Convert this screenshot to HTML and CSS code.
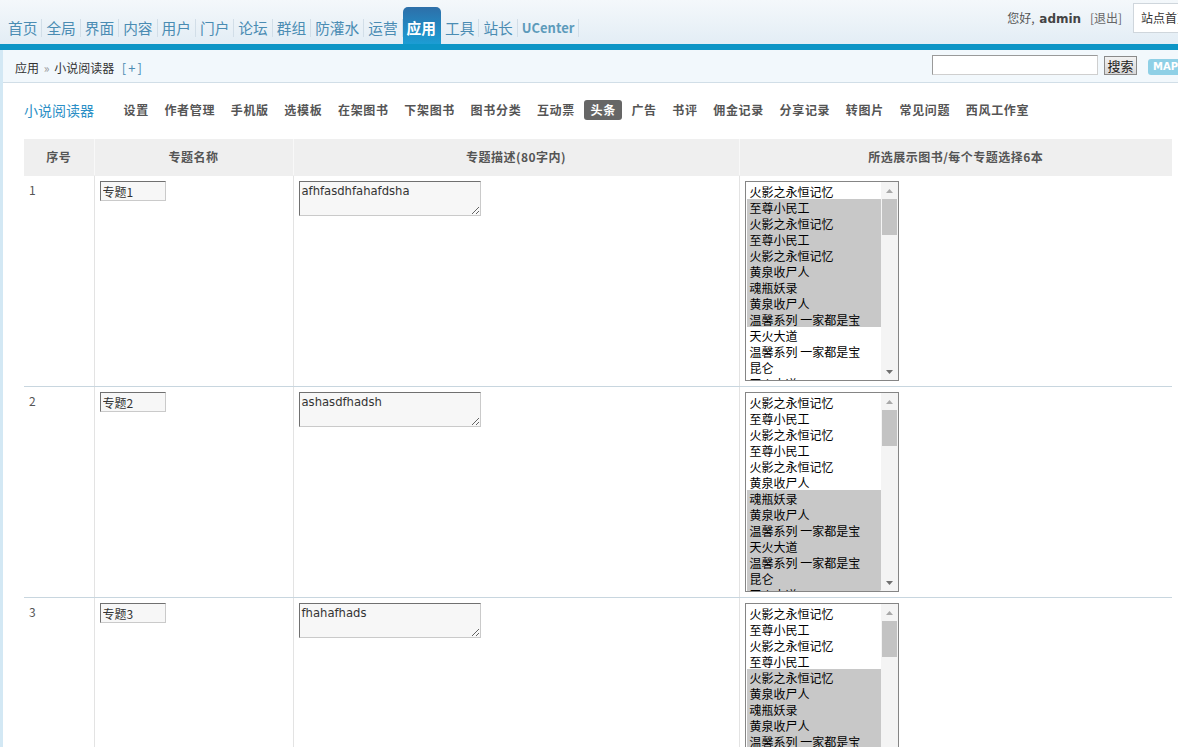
FILE: index.html
```html
<!DOCTYPE html>
<html lang="zh-CN">
<head>
<meta charset="utf-8">
<title>小说阅读器 - 头条</title>
<link rel="stylesheet" href="styles.css">
</head>
<body>
<div class="header">
  <ul class="nav">
    <li><a href="#">首页</a></li>
    <li><a href="#">全局</a></li>
    <li><a href="#">界面</a></li>
    <li><a href="#">内容</a></li>
    <li><a href="#">用户</a></li>
    <li><a href="#">门户</a></li>
    <li><a href="#">论坛</a></li>
    <li><a href="#">群组</a></li>
    <li><a href="#">防灌水</a></li>
    <li><a href="#">运营</a></li>
    <li class="on"><a href="#">应用</a></li>
    <li><a href="#">工具</a></li>
    <li><a href="#">站长</a></li>
    <li class="uc"><a href="#">UCenter</a></li>
  </ul>
  <div class="user">
    <span class="hello">您好, <b>admin</b> <a href="#">[退出]</a></span>
    <div class="sitebox">站点首页</div>
  </div>
</div>
<div class="frame">
  <div class="crumb">
    <div class="path">应用 <span class="raquo">»</span> 小说阅读器 <a class="add" href="#">[+]</a></div>
    <form class="search">
      <input class="skw" type="text">
      <button type="button">搜索</button>
      <span class="map">MAP</span>
    </form>
  </div>
  <div class="content">
    <div class="submenu">
      <h3>小说阅读器</h3>
      <ul>
        <li><a href="#">设置</a></li>
        <li><a href="#">作者管理</a></li>
        <li><a href="#">手机版</a></li>
        <li><a href="#">选模板</a></li>
        <li><a href="#">在架图书</a></li>
        <li><a href="#">下架图书</a></li>
        <li><a href="#">图书分类</a></li>
        <li><a href="#">互动票</a></li>
        <li class="on"><a href="#">头条</a></li>
        <li><a href="#">广告</a></li>
        <li><a href="#">书评</a></li>
        <li><a href="#">佣金记录</a></li>
        <li><a href="#">分享记录</a></li>
        <li><a href="#">转图片</a></li>
        <li><a href="#">常见问题</a></li>
        <li><a href="#">西风工作室</a></li>
      </ul>
    </div>
    <table class="tb">
      <colgroup><col class="c1"><col class="c2"><col class="c3"><col class="c4"></colgroup>
      <thead>
        <tr><th>序号</th><th>专题名称</th><th>专题描述(80字内)</th><th>所选展示图书/每个专题选择6本</th></tr>
      </thead>
      <tbody>
        <tr>
          <td>1</td>
          <td><input class="tname" type="text" value="专题1"></td>
          <td><textarea class="tdesc">afhfasdhfahafdsha</textarea></td>
          <td>
            <div class="listbox">
              <select class="books" multiple>
                <option>火影之永恒记忆</option>
                <option selected>至尊小民工</option>
                <option selected>火影之永恒记忆</option>
                <option selected>至尊小民工</option>
                <option selected>火影之永恒记忆</option>
                <option selected>黄泉收尸人</option>
                <option selected>魂瓶妖录</option>
                <option selected>黄泉收尸人</option>
                <option selected>温馨系列 一家都是宝</option>
                <option>天火大道</option>
                <option>温馨系列 一家都是宝</option>
                <option>昆仑</option>
                <option>天火大道</option>
                <option>昆仑</option>
                <option>火影之永恒记忆</option>
                <option>至尊小民工</option>
                <option>黄泉收尸人</option>
                <option>魂瓶妖录</option>
                <option>温馨系列 一家都是宝</option>
                <option>天火大道</option>
                <option>昆仑</option>
                <option>火影之永恒记忆</option>
                <option>至尊小民工</option>
                <option>黄泉收尸人</option>
                <option>魂瓶妖录</option>
                <option>温馨系列 一家都是宝</option>
                <option>天火大道</option>
                <option>昆仑</option>
                <option>火影之永恒记忆</option>
                <option>至尊小民工</option>
                <option>黄泉收尸人</option>
                <option>魂瓶妖录</option>
                <option>温馨系列 一家都是宝</option>
                <option>天火大道</option>
                <option>昆仑</option>
              </select>
              <div class="sbar">
                <span class="sb-btn"><svg width="7" height="4" viewBox="0 0 7 4"><path d="M0 4L3.5 0L7 4z" fill="#a8a8a8"/></svg></span>
                <span class="sb-track"><span class="sb-thumb"></span></span>
                <span class="sb-btn"><svg width="7" height="4" viewBox="0 0 7 4"><path d="M0 0L3.5 4L7 0z" fill="#6f6f6f"/></svg></span>
              </div>
            </div>
          </td>
        </tr>
        <tr>
          <td>2</td>
          <td><input class="tname" type="text" value="专题2"></td>
          <td><textarea class="tdesc">ashasdfhadsh</textarea></td>
          <td>
            <div class="listbox">
              <select class="books" multiple>
                <option>火影之永恒记忆</option>
                <option>至尊小民工</option>
                <option>火影之永恒记忆</option>
                <option>至尊小民工</option>
                <option>火影之永恒记忆</option>
                <option>黄泉收尸人</option>
                <option selected>魂瓶妖录</option>
                <option selected>黄泉收尸人</option>
                <option selected>温馨系列 一家都是宝</option>
                <option selected>天火大道</option>
                <option selected>温馨系列 一家都是宝</option>
                <option selected>昆仑</option>
                <option selected>天火大道</option>
                <option>昆仑</option>
                <option>火影之永恒记忆</option>
                <option>至尊小民工</option>
                <option>黄泉收尸人</option>
                <option>魂瓶妖录</option>
                <option>温馨系列 一家都是宝</option>
                <option>天火大道</option>
                <option>昆仑</option>
                <option>火影之永恒记忆</option>
                <option>至尊小民工</option>
                <option>黄泉收尸人</option>
                <option>魂瓶妖录</option>
                <option>温馨系列 一家都是宝</option>
                <option>天火大道</option>
                <option>昆仑</option>
                <option>火影之永恒记忆</option>
                <option>至尊小民工</option>
                <option>黄泉收尸人</option>
                <option>魂瓶妖录</option>
                <option>温馨系列 一家都是宝</option>
                <option>天火大道</option>
                <option>昆仑</option>
              </select>
              <div class="sbar">
                <span class="sb-btn"><svg width="7" height="4" viewBox="0 0 7 4"><path d="M0 4L3.5 0L7 4z" fill="#a8a8a8"/></svg></span>
                <span class="sb-track"><span class="sb-thumb"></span></span>
                <span class="sb-btn"><svg width="7" height="4" viewBox="0 0 7 4"><path d="M0 0L3.5 4L7 0z" fill="#6f6f6f"/></svg></span>
              </div>
            </div>
          </td>
        </tr>
        <tr>
          <td>3</td>
          <td><input class="tname" type="text" value="专题3"></td>
          <td><textarea class="tdesc">fhahafhads</textarea></td>
          <td>
            <div class="listbox">
              <select class="books" multiple>
                <option>火影之永恒记忆</option>
                <option>至尊小民工</option>
                <option>火影之永恒记忆</option>
                <option>至尊小民工</option>
                <option selected>火影之永恒记忆</option>
                <option selected>黄泉收尸人</option>
                <option selected>魂瓶妖录</option>
                <option selected>黄泉收尸人</option>
                <option selected>温馨系列 一家都是宝</option>
                <option selected>天火大道</option>
                <option>温馨系列 一家都是宝</option>
                <option>昆仑</option>
                <option>天火大道</option>
                <option>昆仑</option>
                <option>火影之永恒记忆</option>
                <option>至尊小民工</option>
                <option>黄泉收尸人</option>
                <option>魂瓶妖录</option>
                <option>温馨系列 一家都是宝</option>
                <option>天火大道</option>
                <option>昆仑</option>
                <option>火影之永恒记忆</option>
                <option>至尊小民工</option>
                <option>黄泉收尸人</option>
                <option>魂瓶妖录</option>
                <option>温馨系列 一家都是宝</option>
                <option>天火大道</option>
                <option>昆仑</option>
                <option>火影之永恒记忆</option>
                <option>至尊小民工</option>
                <option>黄泉收尸人</option>
                <option>魂瓶妖录</option>
                <option>温馨系列 一家都是宝</option>
                <option>天火大道</option>
                <option>昆仑</option>
              </select>
              <div class="sbar">
                <span class="sb-btn"><svg width="7" height="4" viewBox="0 0 7 4"><path d="M0 4L3.5 0L7 4z" fill="#a8a8a8"/></svg></span>
                <span class="sb-track"><span class="sb-thumb"></span></span>
                <span class="sb-btn"><svg width="7" height="4" viewBox="0 0 7 4"><path d="M0 0L3.5 4L7 0z" fill="#6f6f6f"/></svg></span>
              </div>
            </div>
          </td>
        </tr>
      </tbody>
    </table>
  </div>
</div>
</body>
</html>
```

FILE: styles.css
```css
html, body {
  margin: 0;
  overflow: hidden;
}
body {
  width: 1178px;
  font: 12px/1.5 "Noto Sans CJK SC", "Noto Sans", sans-serif;
  color: #333;
  background: #fff;
}
a { text-decoration: none; }

/* ---------- header ---------- */
.header {
  display: flex;
  justify-content: space-between;
  height: 44px;
  background: linear-gradient(#f4f8fb, #e3edf5);
  border-bottom: 6px solid #0c95c6;
}
.nav {
  display: flex;
  list-style: none;
  margin: 0;
  padding: 7px 0 0 4px;
}
.nav li { padding-top: 12px; }
.nav a {
  display: block;
  padding: 0 4px;
  font-size: 14.7px;
  line-height: 18px;
  color: #4a8cb3;
  border-right: 1px solid #d2dee8;
}
.nav li.on {
  background: linear-gradient(#2d6fa9, #1c9dd4);
  border-radius: 5px 5px 0 0;
}
.nav li.on a {
  color: #fff;
  font-weight: bold;
  border-right-color: transparent;
}
.nav li.uc a {
  font-size: 13px;
  font-weight: bold;
  color: #5d9bbb;
}
.user {
  display: flex;
  align-items: center;
  align-self: flex-start;
  height: 30px;
  margin-top: 3px;
  margin-right: -60px;
}
.hello {
  color: #555;
  margin-right: 11px;
}
.hello b {
  color: #444;
  font: bold 12px "DejaVu Sans", sans-serif;
  margin-left: 2px;
}
.hello a { color: #666; margin-left: 6px; }
.sitebox {
  width: 96px;
  height: 28px;
  padding-left: 7px;
  line-height: 28px;
  border: 1px solid #cfd6dc;
  background: #fff;
  color: #333;
}

/* ---------- breadcrumb ---------- */
.frame { border-left: 3px solid #d3e8f4; }
.crumb {
  display: flex;
  justify-content: space-between;
  align-items: flex-start;
  height: 27px;
  padding: 5px 0 0 12px;
  background: #f2f8fc;
  border-bottom: 1px solid #d1dee7;
}
.path { line-height: 26px; color: #333; }
.raquo { color: #999; margin: 0 2px; }
.add {
  color: #4c8bb3;
  margin-left: 5px;
  font-size: 13px;
  letter-spacing: 2px;
}
.search {
  display: flex;
  align-items: flex-start;
  margin: 0 -19px 0 0;
}
.skw {
  box-sizing: border-box;
  width: 166px;
  height: 20px;
  margin: 0;
  border: 1px solid;
  border-color: #9a9a9a #cfcfcf #cfcfcf #9a9a9a;
  background: #fff;
}
.search button {
  width: 33px;
  height: 19px;
  margin: 1px 0 0 6px;
  padding: 0;
  font: 13px/17px "Noto Sans CJK SC", sans-serif;
  color: #222;
  border: 1px solid #8a8a8a;
  background: linear-gradient(#f2f2f2, #d8d8d8);
}
.map {
  width: 44px;
  height: 16px;
  margin: 4px 0 0 11px;
  padding-left: 5px;
  border-radius: 3px;
  background: #8fd0e6;
  color: #fff;
  font: bold 10px/16px "DejaVu Sans", sans-serif;
}

/* ---------- content ---------- */
.content { padding: 17px 6px 0 21px; }
.submenu {
  display: flex;
  align-items: center;
  height: 20px;
}
.submenu h3 {
  margin: 0 23px 0 0;
  font-size: 14px;
  font-weight: normal;
  line-height: 20px;
  color: #2b8fc6;
}
.submenu ul {
  display: flex;
  gap: 3px;
  list-style: none;
  margin: 0;
  padding: 0;
}
.submenu a {
  display: block;
  padding: 0 6px 0 6.5px;
  line-height: 20px;
  font-weight: bold;
  letter-spacing: 0.7px;
  color: #555;
  border-radius: 3px;
}
.submenu li.on a {
  background: #666;
  color: #fff;
}

/* ---------- table ---------- */
.tb {
  width: 1148px;
  margin-top: 19px;
  border-collapse: collapse;
  table-layout: fixed;
}
.c1 { width: 70px; }
.c2 { width: 199px; }
.c3 { width: 446px; }
.c4 { width: 433px; }
.tb th {
  height: 36px;
  padding: 0;
  background: #efefef;
  font-weight: bold;
  letter-spacing: 0.5px;
  color: #555;
  border-right: 1px solid #f8f8f8;
  border-bottom: 1px solid #efefef;
}
.tb td {
  padding: 5px;
  vertical-align: top;
  line-height: 18px;
  color: #555;
  border-right: 1px solid #e3e3e3;
  border-bottom: 1px solid #c8d6df;
}
.tb th:last-child, .tb td:last-child { border-right: none; }

.tname {
  display: block;
  box-sizing: border-box;
  width: 66px;
  height: 20px;
  margin: 0;
  padding: 0 2px;
  border: 1px solid;
  border-color: #707070 #cacaca #cacaca #707070;
  background: #f7f7f7;
  font: 12px "Noto Sans CJK SC", sans-serif;
  color: #333;
}
.tdesc {
  display: block;
  box-sizing: border-box;
  width: 182px;
  height: 35px;
  margin: 0;
  padding: 2px;
  border: 1px solid;
  border-color: #707070 #cacaca #cacaca #707070;
  background: #f7f7f7;
  font: 11.6px/14px "DejaVu Sans", sans-serif;
  color: #333;
}

/* list box with classic scrollbar */
.listbox {
  display: flex;
  box-sizing: border-box;
  width: 154px;
  height: 200px;
  border: 1px solid #858585;
  background: #fff;
}
.books {
  flex: 1;
  min-width: 0;
  height: 198px;
  margin: 0;
  padding: 1px 0 1px 1px;
  border: 0;
  overflow: hidden;
  background: #fff;
  font: 12px "Noto Sans CJK SC", sans-serif;
  color: #000;
  outline: none;
}
.books option {
  height: 16px;
  min-height: 16px;
  line-height: 16px;
  padding: 0 3px;
  color: #000;
}
.books option:checked {
  background: #c8c8c8 linear-gradient(#c8c8c8, #c8c8c8);
  color: #000;
}
.sbar {
  display: flex;
  flex-direction: column;
  width: 17px;
  background: #f4f4f4;
}
.sb-btn {
  display: flex;
  align-items: center;
  justify-content: center;
  height: 17px;
}
.sb-track {
  flex: 1;
  padding: 0 1px;
}
.sb-thumb {
  display: block;
  height: 36px;
  background: #c3c3c3;
}
```
